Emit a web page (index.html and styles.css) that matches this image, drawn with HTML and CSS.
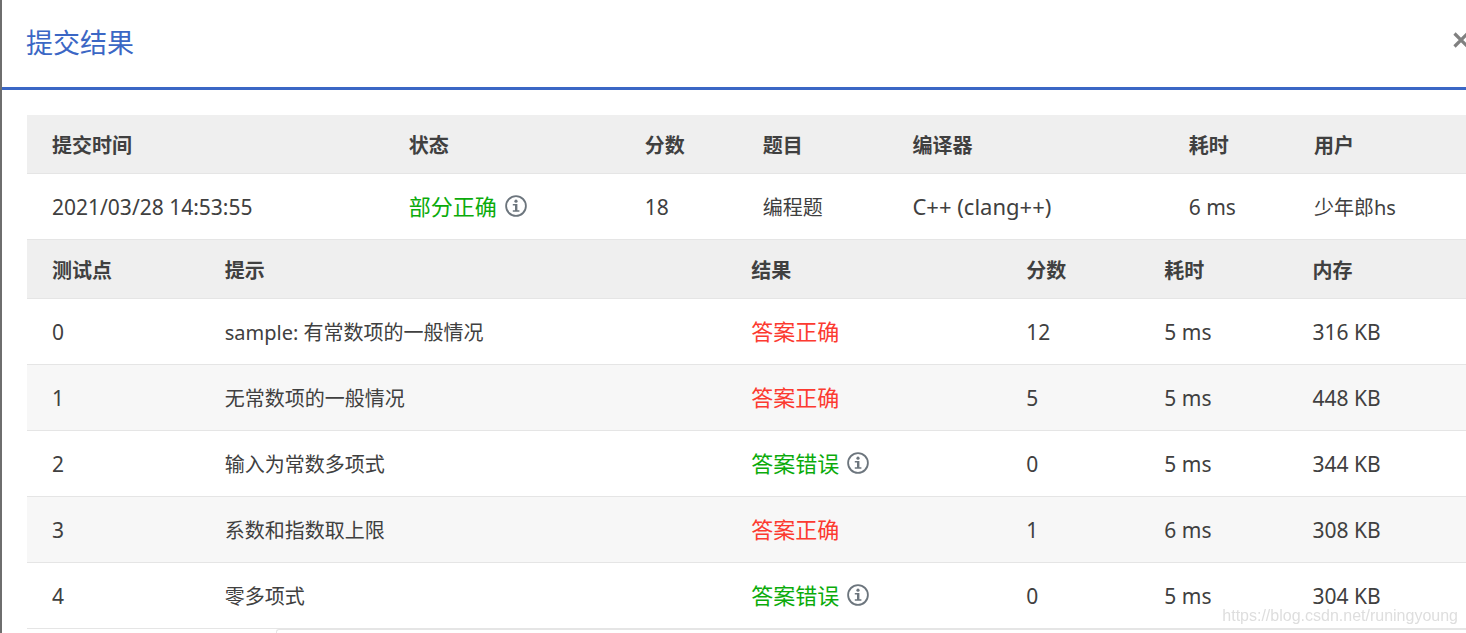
FILE: index.html
```html
<!DOCTYPE html>
<html lang="zh-CN">
<head>
<meta charset="utf-8">
<title>提交结果</title>
<link rel="stylesheet" href="styles.css">
</head>
<body>
<svg class="sprite" aria-hidden="true">
  <symbol id="info" viewBox="0 0 22 22">
    <circle cx="11" cy="11" r="9.9" fill="none" stroke="currentColor" stroke-width="1.8"/>
    <circle cx="11" cy="6.2" r="1.6" fill="currentColor"/>
    <path d="M7.8 9h4.6v6.2h2v1.6H7.8v-1.6h2.2v-4.6H7.8z" fill="currentColor"/>
  </symbol>
</svg>
<main class="dialog">
  <header class="dialog-header">
    <h1 class="title">提交结果</h1>
    <button class="close" type="button" aria-label="关闭">
      <svg class="close-icon" viewBox="0 0 16 16"><path d="M1.5 1.5l13 13M14.5 1.5l-13 13" stroke="currentColor" stroke-width="3.2" fill="none"/></svg>
    </button>
  </header>
  <div class="dialog-body">
    <table class="grid summary">
      <colgroup><col class="s-time"><col class="s-status"><col class="s-score"><col class="s-problem"><col class="s-compiler"><col class="s-cost"><col></colgroup>
      <thead>
        <tr><th>提交时间</th><th>状态</th><th>分数</th><th>题目</th><th>编译器</th><th>耗时</th><th>用户</th></tr>
      </thead>
      <tbody>
        <tr>
          <td class="num">2021/03/28 14:53:55</td>
          <td class="result"><span class="status wrong">部分正确<button class="info" type="button" aria-label="详情"><svg class="info-icon"><use href="#info"/></svg></button></span></td>
          <td class="num">18</td><td>编程题</td><td class="code">C++ (clang++)</td><td class="num">6 ms</td><td>少年郎hs</td>
        </tr>
      </tbody>
    </table>
    <table class="grid cases">
      <colgroup><col class="c-id"><col class="c-hint"><col class="c-result"><col class="c-score"><col class="c-cost"><col></colgroup>
      <thead>
        <tr><th>测试点</th><th>提示</th><th>结果</th><th>分数</th><th>耗时</th><th>内存</th></tr>
      </thead>
      <tbody>
        <tr><td class="num">0</td><td>sample: 有常数项的一般情况</td><td class="result"><span class="status right">答案正确</span></td><td class="num">12</td><td class="num">5 ms</td><td class="num">316 KB</td></tr>
        <tr><td class="num">1</td><td>无常数项的一般情况</td><td class="result"><span class="status right">答案正确</span></td><td class="num">5</td><td class="num">5 ms</td><td class="num">448 KB</td></tr>
        <tr><td class="num">2</td><td>输入为常数多项式</td><td class="result"><span class="status wrong">答案错误<button class="info" type="button" aria-label="详情"><svg class="info-icon"><use href="#info"/></svg></button></span></td><td class="num">0</td><td class="num">5 ms</td><td class="num">344 KB</td></tr>
        <tr><td class="num">3</td><td>系数和指数取上限</td><td class="result"><span class="status right">答案正确</span></td><td class="num">1</td><td class="num">6 ms</td><td class="num">308 KB</td></tr>
        <tr><td class="num">4</td><td>零多项式</td><td class="result"><span class="status wrong">答案错误<button class="info" type="button" aria-label="详情"><svg class="info-icon"><use href="#info"/></svg></button></span></td><td class="num">0</td><td class="num">5 ms</td><td class="num">304 KB</td></tr>
      </tbody>
    </table>
  </div>
  <div class="panel-edge"></div>
</main>
<div class="watermark">https://blog.csdn.net/runingyoung</div>
</body>
</html>
```
FILE: styles.css
```css
* { box-sizing: border-box; }

html { height: 100%; overflow: hidden; }

body {
  margin: 0;
  min-height: 100%;
  display: flex;
  color: #404040;
  background: #fff;
  font: 20px/28px "Noto Sans", "Noto Sans CJK SC", sans-serif;
}

.sprite { position: absolute; width: 0; height: 0; }

.dialog {
  flex: 1;
  min-width: 0;
  min-height: 100vh;
  border-left: 2px solid #6e6e6e;
}

.dialog-header {
  display: flex;
  justify-content: space-between;
  align-items: flex-start;
  height: 90px;
  padding: 23px 0 0 24px;
  border-bottom: 3px solid #3b67c5;
  overflow: hidden;
}

.title {
  margin: 0;
  font-size: 27px;
  line-height: 40px;
  font-weight: 400;
  color: #3b67c5;
}

.close {
  display: flex;
  margin: 9px -3px 0 0;
  padding: 0;
  border: 0;
  background: none;
  color: #808080;
}

.close-icon { width: 16px; height: 16px; }

.dialog-body { padding: 25px 0 0 25px; }

.grid {
  width: 100%;
  table-layout: fixed;
  border-collapse: separate;
  border-spacing: 0;
}

.grid th,
.grid td {
  padding: 0 0 0 25px;
  text-align: left;
  white-space: nowrap;
  border-bottom: 1px solid #e5e5e5;
}

.grid th {
  height: 59px;
  padding-top: 4px;
  background: #efefef;
  font-weight: 700;
}

.grid td { height: 66px; padding-top: 2px; }
.cases tbody tr:nth-child(even) { background: #f7f7f7; }

.grid .num { padding-top: 0; font-size: 21px; }
.grid .code { padding: 0 0 2px 25px; font-size: 22px; }
.grid .result { padding: 0 0 2px 25px; }

.s-time { width: 24.8%; }
.s-status { width: 16.4%; }
.s-score { width: 8.2%; }
.s-problem { width: 10.4%; }
.s-compiler { width: 19.2%; }
.s-cost { width: 8.7%; }

.c-id { width: 12%; }
.c-hint { width: 36.6%; }
.c-result { width: 19.1%; }
.c-score { width: 9.6%; }
.c-cost { width: 10.3%; }

.status {
  display: inline-flex;
  align-items: center;
  gap: 8px;
  font-size: 22px;
  vertical-align: middle;
}

.right { color: #fc3a30; }
.wrong { color: #0bab0b; }

.info {
  display: flex;
  padding: 0;
  border: 0;
  background: none;
  color: #6c757d;
}

.info-icon { width: 22px; height: 22px; }

.panel-edge {
  height: 8px;
  margin-left: 274px;
  border-top: 1px solid #e5e5e5;
  border-left: 1px solid #e5e5e5;
  border-top-left-radius: 3px;
}

.watermark {
  position: fixed;
  right: 8px;
  bottom: 9px;
  font: 16px/16px "Liberation Sans", sans-serif;
  color: #dedede;
}
```
